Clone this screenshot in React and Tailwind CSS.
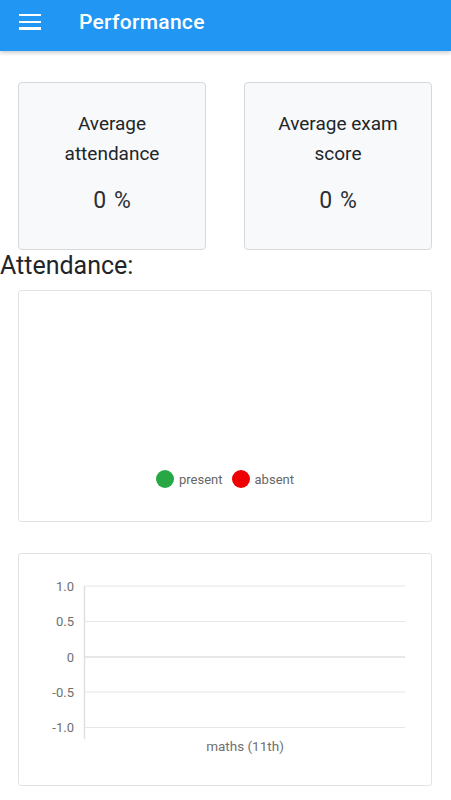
import React from 'react';

const font = { fontFamily: 'Roboto, "Liberation Sans", sans-serif' };

function StatCard({ title, value }) {
  return (
    <div className="w-[188px] h-[168px] bg-[#f8f9fa] border border-[#d6d8db] rounded-[4px] flex flex-col items-center pt-[26px]">
      <div className="text-[19px] leading-[30px] text-[#212529] text-center px-4">{title}</div>
      <div className="mt-[17px] text-[23px] leading-[30px] text-[#2b3035] [word-spacing:2px]">{value}</div>
    </div>
  );
}

function ScoreChart() {
  const ticks = [
    { label: '1.0', y: 32 },
    { label: '0.5', y: 67.5 },
    { label: '0', y: 103 },
    { label: '-0.5', y: 138 },
    { label: '-1.0', y: 173.5 },
  ];
  return (
    <svg width="412" height="230" viewBox="0 0 412 230">
      {ticks.map((t) => (
        <g key={t.label}>
          <line x1="65" x2="386" y1={t.y} y2={t.y} stroke={t.label === '0' ? '#cfcfcf' : '#e6e6e6'} strokeWidth="1.2" />
          <text x="55" y={t.y + 4.5} textAnchor="end" fontSize="13" fill="#6f6f6f" style={font}>{t.label}</text>
        </g>
      ))}
      <line x1="65.5" x2="65.5" y1="32" y2="185" stroke="#e0e0e0" strokeWidth="1.5" />
      <text x="226" y="197" textAnchor="middle" fontSize="13.5" fill="#6f6f6f" style={font}>maths (11th)</text>
    </svg>
  );
}

export default function App() {
  return (
    <div className="w-[451px] min-h-[800px] bg-white" style={font}>
      <header className="h-[51px] bg-[#2196f3] flex items-start pt-[8px] shadow-[0_2px_4px_rgba(0,0,0,0.2)]">
        <div className="ml-[19px] mt-[6px] w-[22px] flex flex-col gap-[4.5px]">
          <span className="block h-[2.2px] bg-white" />
          <span className="block h-[2.2px] bg-white" />
          <span className="block h-[2.2px] bg-white" />
        </div>
        <h1 className="ml-[38px] text-[21px] leading-[28px] font-medium text-white tracking-[0.3px]">Performance</h1>
      </header>

      <div className="flex justify-between pl-[18px] pr-[19px] mt-[31px]">
        <StatCard title="Average attendance" value="0 %" />
        <StatCard title="Average exam score" value="0 %" />
      </div>

      <h2 className="text-[25px] leading-[30px] text-[#212529] mt-[1px]">Attendance:</h2>

      <div className="mx-[18px] mr-[19px] mt-[9px] h-[232px] border border-[#e3e3e3] rounded-[3px] flex flex-col justify-end items-center pb-[32px]">
        <div className="flex items-center text-[13px] text-[#666]">
          <span className="w-[18px] h-[18px] rounded-full bg-[#28a745]" />
          <span className="ml-[5px]">present</span>
          <span className="ml-[9px] w-[18px] h-[18px] rounded-full bg-[#ee0000]" />
          <span className="ml-[5px]">absent</span>
        </div>
      </div>

      <div className="mx-[18px] mr-[19px] mt-[31px] h-[233px] border border-[#e3e3e3] rounded-[3px]">
        <ScoreChart />
      </div>
    </div>
  );
}
